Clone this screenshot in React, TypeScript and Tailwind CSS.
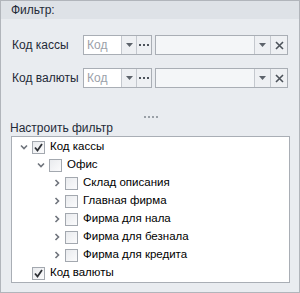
import React from 'react';

const font = { fontFamily: '"Liberation Sans", Arial, sans-serif' };

function Arrow() {
  return (
    <svg width="7" height="4" viewBox="0 0 7 4">
      <path d="M0 0H7L3.5 4Z" fill="#5d636b" />
    </svg>
  );
}

function Dots() {
  return (
    <svg width="10" height="2" viewBox="0 0 10 2">
      <rect x="0" y="0" width="2" height="2" fill="#4d535b" />
      <rect x="4" y="0" width="2" height="2" fill="#4d535b" />
      <rect x="8" y="0" width="2" height="2" fill="#4d535b" />
    </svg>
  );
}

function Cross() {
  return (
    <svg width="9" height="9" viewBox="0 0 9 9">
      <path d="M1 1L8 8M8 1L1 8" stroke="#4d535b" strokeWidth="1.6" />
    </svg>
  );
}

function Chevron({ open }: { open: boolean }) {
  return (
    <svg width="8" height="8" viewBox="0 0 8 8">
      {open ? (
        <path d="M1 2.5L4 5.5L7 2.5" stroke="#6f747c" strokeWidth="1.6" fill="none" />
      ) : (
        <path d="M2.5 1L5.5 4L2.5 7" stroke="#6f747c" strokeWidth="1.6" fill="none" />
      )}
    </svg>
  );
}

function Check({ checked }: { checked?: boolean }) {
  return (
    <span className="w-[13px] h-[13px] border border-[#a3a8af] bg-gradient-to-br from-[#e9ebee] to-[#fbfbfc] flex items-center justify-center shrink-0">
      {checked && (
        <svg width="9" height="9" viewBox="0 0 9 9">
          <path d="M1 4.5L3.5 7.5L8 1" stroke="#2f3237" strokeWidth="1.8" fill="none" />
        </svg>
      )}
    </span>
  );
}

function FilterRow({ label }: { label: string }) {
  return (
    <div className="flex items-center h-[20px]">
      <div className="w-[82px] shrink-0 pl-[11px] text-[12px] text-[#1f2a38] whitespace-nowrap">{label}</div>
      <div className="flex shrink-0 h-[20px] w-[69px] border border-[#a9aeb5] bg-white">
        <div className="flex-1 pl-[3px] text-[12px] leading-[18px] text-[#9ba1a9]">Код</div>
        <div className="w-[15px] border-l border-[#c4c8ce] bg-[#eef0f3] flex items-center justify-center">
          <Arrow />
        </div>
        <div className="w-[15px] border-l border-[#c4c8ce] bg-[#eef0f3] flex items-center justify-center">
          <Dots />
        </div>
      </div>
      <div className="flex shrink-0 h-[20px] w-[133px] ml-[3px] border border-[#a9aeb5] bg-[#f4f6f8]">
        <div className="flex-1" />
        <div className="w-[16px] border-l border-[#c4c8ce] bg-[#eef0f3] flex items-center justify-center">
          <Arrow />
        </div>
        <div className="w-[17px] border-l border-[#c4c8ce] bg-[#eef0f3] flex items-center justify-center">
          <Cross />
        </div>
      </div>
    </div>
  );
}

type Node = { text: string; level: number; chevron?: 'open' | 'closed'; checked?: boolean };

const nodes: Node[] = [
  { text: 'Код кассы', level: 0, chevron: 'open', checked: true },
  { text: 'Офис', level: 1, chevron: 'open' },
  { text: 'Склад описания', level: 2, chevron: 'closed' },
  { text: 'Главная фирма', level: 2, chevron: 'closed' },
  { text: 'Фирма для нала', level: 2, chevron: 'closed' },
  { text: 'Фирма для безнала', level: 2, chevron: 'closed' },
  { text: 'Фирма для кредита', level: 2, chevron: 'closed' },
  { text: 'Код валюты', level: 0, checked: true },
];

const indent = ['pl-[4px]', 'pl-[21px]', 'pl-[37px]'];

export default function App() {
  return (
    <div style={font} className="w-[300px] h-[293px] bg-white">
      <div className="w-[300px] h-[293px] border border-[#b1b5bb] bg-[#e9ecf0] flex flex-col">
        <div className="h-[18px] bg-[#dee2e7] pl-[10px] text-[12px] leading-[18px] text-[#1f2a38]">Фильтр:</div>
        <div className="pt-[16px] flex flex-col gap-[13px]">
          <FilterRow label="Код кассы" />
          <FilterRow label="Код валюты" />
        </div>
        <div className="flex justify-center mt-[28px] h-[4px] pl-[2px]">
          <div className="flex gap-[2px]">
            <span className="w-[2px] h-[2px] bg-[#9aa0a7]" />
            <span className="w-[2px] h-[2px] bg-[#9aa0a7]" />
            <span className="w-[2px] h-[2px] bg-[#9aa0a7]" />
            <span className="w-[2px] h-[2px] bg-[#9aa0a7]" />
          </div>
        </div>
        <div className="pl-[9px] text-[12px] leading-[16px] text-[#1f2a38]">Настроить фильтр</div>
        <div className="ml-[10px] mr-[9px] h-[147px] border border-[#a9aeb5] bg-white pt-[1px]">
          {nodes.map((n, i) => (
            <div key={i} className={`flex items-center h-[18px] ${indent[n.level]}`}>
              <span className="w-[16px] flex items-center justify-center">
                {n.chevron && <Chevron open={n.chevron === 'open'} />}
              </span>
              <Check checked={n.checked} />
              <span className="ml-[5px] text-[11.5px] text-black whitespace-nowrap">{n.text}</span>
            </div>
          ))}
        </div>
      </div>
    </div>
  );
}
